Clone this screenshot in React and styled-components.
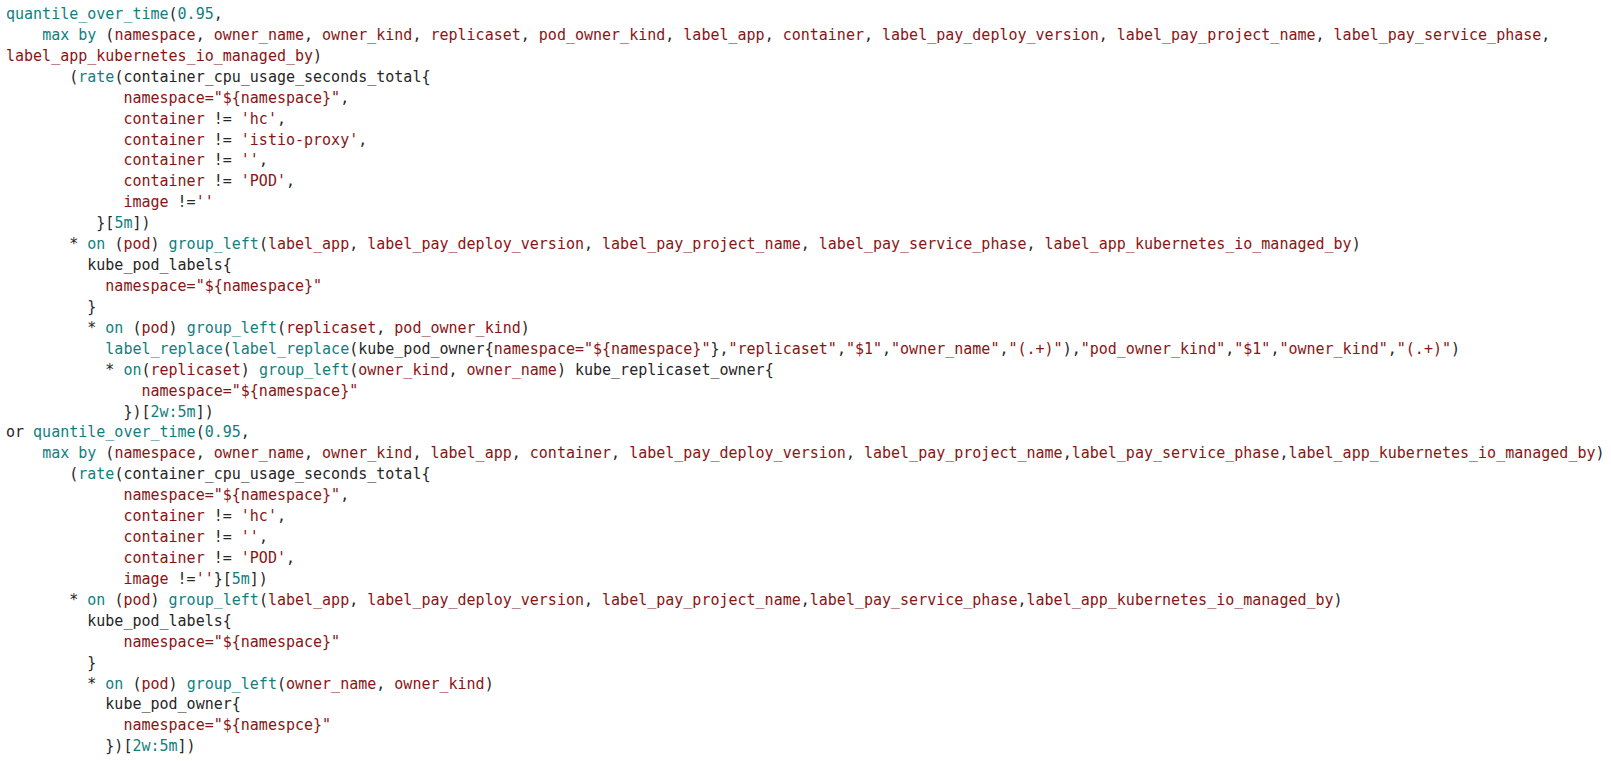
import React from "react";
import styled, { createGlobalStyle } from "styled-components";

const GlobalStyle = createGlobalStyle`
	html, body {
		margin: 0;
		padding: 0;
		background: #ffffff;
	}
`;

const CodeBlock = styled.pre`
	margin: 0;
	padding: 4px 6px;
	font-family: "DejaVu Sans Mono", "Liberation Mono", monospace;
	font-size: 15px;
	line-height: 20.93px;
	color: #262626;
	background: #ffffff;
	white-space: pre;
`;

const Line = styled.div`
	height: 20.93px;
`;

const colors = {
	fn: "#117f7e",
	num: "#117f7e",
	label: "#8a1414",
	str: "#8a1414",
	plain: "#262626",
};

const Token = styled.span`
	color: ${(props) => colors[props.$kind] || colors.plain};
`;

const FUNCTIONS = new Set([
	"quantile_over_time",
	"max",
	"by",
	"rate",
	"on",
	"group_left",
	"label_replace",
]);

const PLAIN_WORDS = new Set([
	"or",
	"container_cpu_usage_seconds_total",
	"kube_pod_labels",
	"kube_pod_owner",
	"kube_replicaset_owner",
]);

const source = `quantile_over_time(0.95,
    max by (namespace, owner_name, owner_kind, replicaset, pod_owner_kind, label_app, container, label_pay_deploy_version, label_pay_project_name, label_pay_service_phase,
label_app_kubernetes_io_managed_by)
       (rate(container_cpu_usage_seconds_total{
             namespace="\${namespace}",
             container != 'hc',
             container != 'istio-proxy',
             container != '',
             container != 'POD',
             image !=''
          }[5m])
       * on (pod) group_left(label_app, label_pay_deploy_version, label_pay_project_name, label_pay_service_phase, label_app_kubernetes_io_managed_by)
         kube_pod_labels{
           namespace="\${namespace}"
         }
         * on (pod) group_left(replicaset, pod_owner_kind)
           label_replace(label_replace(kube_pod_owner{namespace="\${namespace}"},"replicaset","$1","owner_name","(.+)"),"pod_owner_kind","$1","owner_kind","(.+)")
           * on(replicaset) group_left(owner_kind, owner_name) kube_replicaset_owner{
               namespace="\${namespace}"
             })[2w:5m])
or quantile_over_time(0.95,
    max by (namespace, owner_name, owner_kind, label_app, container, label_pay_deploy_version, label_pay_project_name,label_pay_service_phase,label_app_kubernetes_io_managed_by)
       (rate(container_cpu_usage_seconds_total{
             namespace="\${namespace}",
             container != 'hc',
             container != '',
             container != 'POD',
             image !=''}[5m])
       * on (pod) group_left(label_app, label_pay_deploy_version, label_pay_project_name,label_pay_service_phase,label_app_kubernetes_io_managed_by)
         kube_pod_labels{
             namespace="\${namespace}"
         }
         * on (pod) group_left(owner_name, owner_kind)
           kube_pod_owner{
             namespace="\${namespce}"
           })[2w:5m])`;

const TOKEN =
	/("[^"]*"|'[^']*')|(\d+[smhdwy](?::\d+[smhdwy])?|\d+\.\d+|\d+)|([A-Za-z_][A-Za-z0-9_]*)(=(?!=))?|(\s+|[^\sA-Za-z0-9_"']+)/g;

// small promql highlighter, just enough for this query
const tokenize = (line) => {
	const out = [];
	let m;
	TOKEN.lastIndex = 0;
	while ((m = TOKEN.exec(line)) !== null) {
		if (m[1]) out.push({ kind: "str", text: m[1] });
		else if (m[2]) out.push({ kind: "num", text: m[2] });
		else if (m[3]) {
			const word = m[3];
			let kind = "label";
			if (FUNCTIONS.has(word)) kind = "fn";
			else if (PLAIN_WORDS.has(word)) kind = "plain";
			out.push({ kind, text: word + (m[4] || "") });
		} else out.push({ kind: "plain", text: m[5] });
	}
	return out;
};

const QueryLine = ({ text }) => (
	<Line>
		{tokenize(text).map((tok, i) => (
			<Token key={i} $kind={tok.kind}>
				{tok.text}
			</Token>
		))}
	</Line>
);

const App = () => (
	<>
		<GlobalStyle />
		<CodeBlock>
			{source.split("\n").map((line, i) => (
				<QueryLine key={i} text={line} />
			))}
		</CodeBlock>
	</>
);

export default App;
